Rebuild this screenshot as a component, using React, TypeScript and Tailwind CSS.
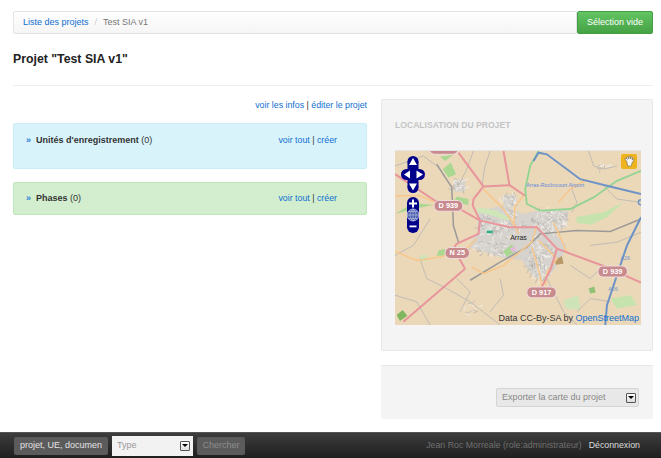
import React from "react";

const font = { fontFamily: '"Liberation Sans", Arial, sans-serif' };

// little street grid for the town, always the same numbers
function buildStreets(start: number, count: number) {
  const out: string[] = [];
  let seed = start;
  const next = () => {
    seed = (seed * 1103 + 12345) % 65536;
    return seed / 65536;
  };
  const blobs = [
    { x: 330, y: 235, rx: 70, ry: 45, n: 60 },
    { x: 480, y: 225, rx: 60, ry: 35, n: 55 },
    { x: 450, y: 340, rx: 45, ry: 70, n: 70 },
    { x: 300, y: 310, rx: 60, ry: 25, n: 30 },
    { x: 205, y: 120, rx: 22, ry: 22, n: 14 },
    { x: 355, y: 165, rx: 25, ry: 25, n: 16 },
    { x: 640, y: 60, rx: 18, ry: 14, n: 6 },
    { x: 240, y: 490, rx: 35, ry: 18, n: 8 },
  ];
  blobs.forEach((b) => {
    for (let i = 0; i < Math.round((b.n * count) / 100); i++) {
      const a = next() * Math.PI * 2;
      const r = Math.sqrt(next());
      const x = b.x + Math.cos(a) * r * b.rx;
      const y = b.y + Math.sin(a) * r * b.ry;
      const d = next() * Math.PI * 2;
      const l = 6 + next() * 12;
      out.push(`M${x.toFixed(0)} ${y.toFixed(0)} L${(x + Math.cos(d) * l).toFixed(0)} ${(y + Math.sin(d) * l).toFixed(0)}`);
    }
  });
  return out.join(" ");
}

const darkStreets = buildStreets(17, 70);
const lightStreets = buildStreets(401, 100);

function RoadLabel({ x, y, w, text }: { x: number; y: number; w: number; text?: string }) {
  return (
    <g>
      <rect x={x} y={y} width={w} height={33} rx={15} fill="#c98a8e" stroke="#efdcdc" strokeWidth={3} />
      {text && (
        <text x={x + w / 2} y={y + 24} textAnchor="middle" fontSize={22} fontWeight={700} fill="#fff" fontFamily="Liberation Sans, sans-serif">
          {text}
        </text>
      )}
    </g>
  );
}

function OsmMap() {
  const red = "#e8959b";
  const orange = "#f8c68a";
  const grey = "#b9b7b2";
  return (
    <svg viewBox="15 15 737 525" preserveAspectRatio="none" className="block w-full h-full">
      <rect x="15" y="15" width="737" height="525" fill="#ebd8b9" />
      {/* green patches */}
      <g fill="#aad792">
        <path d="M158 70 L182 50 L198 85 L175 95 Z" />
        <path d="M150 32 L190 26 L165 45 Z" />
        <path d="M20 510 L38 495 L52 512 L30 528 Z" fill="#7fb65f" />
        <path d="M595 430 L612 424 L616 442 L600 445 Z" fill="#8fc274" />
        <path d="M660 460 L720 450 L740 480 L680 490 Z" fill="#c6e3ad" />
        <path d="M235 160 L200 152 L190 170 L235 178 Z" />
        <path d="M15 205 L70 172 L130 178 L70 190 Z" />
        <path d="M520 465 L565 450 L570 495 L525 490 Z" fill="#cfe3b9" />
        <path d="M145 315 L165 310 L165 332 L140 330 Z" />
        <path d="M90 330 L112 328 L112 348 L92 348 Z" fill="#cfe3b9" />
        <path d="M555 215 L640 200 L700 170 L650 215 L600 238 Z" fill="#c6e3ad" />
      </g>
      {/* built-up area */}
      <g fill="#d6d2cd">
        <path d="M265 195 L340 180 L400 205 L440 195 L535 195 L530 240 L490 262 L530 300 L510 345 L490 375 L470 405 L430 395 L395 345 L330 335 L235 305 L262 260 Z" />
        <path d="M190 105 L225 100 L225 135 L195 140 Z" />
        <path d="M335 150 L375 145 L385 180 L345 190 Z" />
      </g>
      <path d={lightStreets} fill="none" stroke="#f2efe9" strokeWidth={2.4} />
      <path d={darkStreets} fill="none" stroke="#aeaca8" strokeWidth={1.8} />
      {/* parks and plots in town */}
      <path d="M262 185 L320 195 L370 225 L340 222 L300 208 L262 200 Z" fill="#cfe6b8" />
      <path d="M338 318 L366 296 L378 318 L350 334 Z" fill="#aad792" />
      <path d="M558 215 L610 220 L590 235 L560 232 Z" fill="#c6e3ad" />
      <path d="M290 255 H308 V263 H290 Z" fill="#2fb08a" />
      <path d="M493 345 L515 332 L520 355 L497 358 Z" fill="#b89a6a" />
      <path d="M360 308 L375 303 L378 318 L365 320 Z" fill="#e4b8dc" />
      {/* minor roads */}
      <g fill="none" stroke={grey} strokeWidth={2.6}>
        <path d="M15 60 L100 30 L140 60" />
        <path d="M250 15 L230 70 L210 110" />
        <path d="M300 15 L285 60 L275 120" />
        <path d="M595 15 L610 60 L640 70 L680 60" />
        <path d="M120 220 L70 300 L15 330" />
        <path d="M90 340 L110 400 L170 430 L240 470 L330 540" />
        <path d="M330 400 L340 450 L300 500" />
        <path d="M470 400 L520 500 L560 540" />
        <path d="M540 360 L600 400 L640 360" />
        <path d="M600 300 L680 290 L752 260" />
        <path d="M15 450 L80 470 L120 540" />
        <path d="M200 400 L240 440 L210 500" />
        <path d="M640 120 L680 160 L752 170" />
        <path d="M560 500 L600 460 L660 470" />
        <path d="M545 130 L560 170 L545 200" />
      </g>
      {/* railway */}
      <g fill="none" stroke="#9b9a98" strokeWidth={4.5}>
        <path d="M140 55 L185 125 L190 240 L205 290" />
        <path d="M240 405 L330 350 L410 305 L450 265 L560 255 L660 258 L752 220" />
      </g>
      {/* secondary roads */}
      <g fill="none" stroke={orange} strokeWidth={4.5}>
        <path d="M15 318 L80 345 L150 335 L230 310 L260 280" />
        <path d="M15 150 L90 150 L135 170" />
        <path d="M280 130 L340 190 L375 240 L385 265" />
        <path d="M405 145 L375 180 L370 240" />
        <path d="M245 365 L280 385 L340 360 L425 290 L440 240" />
        <path d="M425 305 L450 390 L455 425" />
        <path d="M445 285 L500 340 L470 380 L465 420" />
        <path d="M490 230 L530 320" />
        <path d="M505 170 L540 130 L590 100" />
      </g>
      {/* primary roads */}
      <g fill="none" stroke={red} strokeWidth={6}>
        <path d="M15 85 L135 165 L218 195 L270 225 L360 245 L440 245 L500 310 L640 362 L752 412" />
        <path d="M340 15 L358 118 L405 150" />
        <path d="M205 20 L280 122 L358 118 M280 122 L250 160 L248 180 L270 225 L265 265 L200 295 L190 310" />
        <path d="M225 370 L40 530" />
        <path d="M205 335 L225 370" />
        <path d="M500 310 L480 375 L455 425" />
      </g>
      {/* trunk and motorway */}
      <g fill="none">
        <path d="M445 15 L420 60 L405 130 L410 175 L450 195 L540 190 L610 155 L680 105 L752 75" stroke="#93d493" strokeWidth={5.5} />
        <path d="M430 45 L445 20 L470 25 L570 100 L650 120 L752 145" stroke="#6d93c6" strokeWidth={6} />
        <path d="M752 215 L710 300 L680 390 L650 480 L645 540" stroke="#6d93c6" strokeWidth={6} />
      </g>
      <circle cx="752" cy="170" r="8" fill="none" stroke="#6d93c6" strokeWidth={4} />
      <text x="495" y="125" textAnchor="middle" fontSize={16} fill="#5f8bdc" fontFamily="Liberation Sans, sans-serif">
        Arras-Roclincourt Airport
      </text>
      <text x="385" y="283" textAnchor="middle" fontSize={21} fill="#222" fontFamily="Liberation Sans, sans-serif">
        Arras
      </text>
      <text x="705" y="344" textAnchor="middle" fontSize={16} fill="#6d93c6" fontFamily="Liberation Sans, sans-serif">A26</text>
      <text x="668" y="437" textAnchor="middle" fontSize={16} fill="#6d93c6" fontFamily="Liberation Sans, sans-serif">A26</text>
      <RoadLabel x={132} y={164} w={86} text="D 939" />
      <RoadLabel x={118} y={-8} w={86} />
      <RoadLabel x={165} y={306} w={73} text="N 25" />
      <RoadLabel x={623} y={362} w={88} text="D 939" />
      <RoadLabel x={410} y={425} w={88} text="D 917" />
    </svg>
  );
}

function PanZoom() {
  const navy = "#00008b";
  return (
    <svg viewBox="0 0 24 78" className="w-[24px] h-[78px]">
      <circle cx="12" cy="5.5" r="5.5" fill={navy} />
      <circle cx="12" cy="31.5" r="5.5" fill={navy} />
      <rect x="6.5" y="5.5" width="11" height="26" fill={navy} />
      <rect x="0" y="13" width="24" height="11" rx="5.5" fill={navy} />
      <path d="M12 2 L16 9 H8 Z M12 34.5 L16 27.5 H8 Z M3 18.5 L9 14.5 V22.5 Z M22 18.5 L15.5 14.5 V22.5 Z" fill="#fff" />
      <rect x="6" y="41" width="12" height="36" rx="6" fill={navy} />
      <path d="M11 43.5 H13 V46.5 H16 V48.5 H13 V51.5 H11 V48.5 H8 V46.5 H11 Z" fill="#fff" />
      <circle cx="12" cy="59" r="6" fill="#4a5cb0" stroke="#d4d9ee" strokeWidth="0.7" />
      <path d="M6 59 H18 M12 53 V65 M7.5 55.5 H16.5 M7.5 62.5 H16.5 M12 53 C8 55.5 8 62.5 12 65 C16 62.5 16 55.5 12 53" fill="none" stroke="#d4d9ee" strokeWidth="0.5" />
      <rect x="8.5" y="69.5" width="7" height="1.8" fill="#fff" />
    </svg>
  );
}

function HandButton() {
  return (
    <div className="w-[16px] h-[15px] rounded-[2px] bg-[#eeb31d] flex items-center justify-center">
      <svg viewBox="0 0 24 24" className="w-[13px] h-[13px]">
        <path
          d="M7 12 L4 8 C3 6 5 5 6.5 6.5 L8 8 L7 4.5 C6.8 2.8 9 2.5 9.6 4 L11 7 L11.2 3 C11.4 1.5 13.6 1.5 13.7 3 L14 7 L15.4 4 C16 2.7 18 3.4 17.6 5 L16.6 9 L18.6 7.6 C20 6.8 21 8.3 20 9.5 L17 14 C16 17 15.5 19 14 21 L8.5 20 C8 17 7.5 14 7 12 Z"
          fill="#f4f4f4"
          stroke="#555"
          strokeWidth="1"
          strokeLinejoin="round"
        />
      </svg>
    </div>
  );
}

function Arrow() {
  return (
    <span className="w-[10px] h-[10px] border border-[#555] rounded-[1px] bg-gradient-to-b from-white to-[#ddd] flex items-center justify-center shrink-0">
      <span className="w-0 h-0 border-x-[3px] border-x-transparent border-t-[3px] border-t-black" />
    </span>
  );
}

function Rubrique({ title, count, className }: { title: string; count: number; className: string }) {
  return (
    <div className={`rounded-[2px] border pl-[12px] pr-[29px] ${className}`}>
      <div className="flex items-center justify-between">
        <div className="text-[9px] text-[#333] flex items-center">
          <span className="text-[#2f7ed8] font-bold w-[10px]">»</span>
          <b>{title}</b>&nbsp;({count})
        </div>
        <div className="text-[8.8px] text-[#333] -mt-[1px]">
          <a className="text-[#0f6fd1]">voir tout</a> | <a className="text-[#0f6fd1]">créer</a>
        </div>
      </div>
    </div>
  );
}

export default function App() {
  return (
    <div className="w-[661px] h-[458px] bg-white flex flex-col overflow-hidden text-[#333]" style={font}>
      <div className="flex-1 pl-[13px] pr-[8px] pt-[11px]">
        <div className="flex h-[23px]">
          <div className="flex-1 flex items-center pl-[9px] text-[9px] border border-[#e3e3e3] rounded-l-[2px] bg-gradient-to-b from-white to-[#f5f5f5]">
            <a className="text-[#0f6fd1]">Liste des projets</a>
            <span className="text-[#ccc] mx-[6px]">/</span>
            <span className="text-[#777]">Test SIA v1</span>
          </div>
          <div className="w-[76px] flex items-center justify-center text-[9px] text-white rounded-[2px] border border-[#429c43] bg-gradient-to-b from-[#62c462] to-[#45a245]">
            Sélection vide
          </div>
        </div>

        <h1 className="text-[12.3px] leading-[14px] font-bold text-[#222] mt-[18px]">Projet "Test SIA v1"</h1>
        <div className="h-px bg-[#eeeeee] mt-[19px]" />

        <div className="flex gap-[14px] mt-[13px]">
          <div className="w-[354px]">
            <div className="text-[8.8px] leading-[11px] text-right mt-[1px] text-[#333]">
              <a className="text-[#0f6fd1]">voir les infos</a> | <a className="text-[#0f6fd1]">éditer le projet</a>
            </div>
            <Rubrique
              title="Unités d'enregistrement"
              count={0}
              className="mt-[12px] h-[46px] pt-[10px] bg-[#d9f3fb] border-[#c8ecf8]"
            />
            <Rubrique
              title="Phases"
              count={0}
              className="mt-[13px] h-[33px] pt-[9px] bg-[#d2eecf] border-[#bfe6bc]"
            />
          </div>

          <div className="w-[272px]">
            <div className="h-[252px] bg-[#f4f4f4] border border-[#e8e8e8] rounded-[2px] px-[13px] pt-[20px]">
              <div className="text-[8.6px] leading-[11px] font-bold text-[#c4c4c4]">LOCALISATION DU PROJET</div>
              <div className="relative h-[175px] w-[246px] mt-[19px] border-t border-[#e4e4e4]">
                <OsmMap />
                <div className="absolute left-[6px] top-[5px]">
                  <PanZoom />
                </div>
                <div className="absolute right-[4px] top-[3px]">
                  <HandButton />
                </div>
                <div className="absolute right-[2px] bottom-[1px] text-[9px] leading-[12px] text-[#333]">
                  Data CC-By-SA by <a className="text-[#0f6fd1]">OpenStreetMap</a>
                </div>
              </div>
            </div>
            <div className="h-[54px] mt-[14px] bg-[#f4f4f4] border-t border-[#e8e8e8] rounded-b-[2px] flex justify-end items-start pr-[14px] pt-[22px]">
              <div className="w-[143px] h-[19px] bg-[#e8e8e8] border border-[#d4d4d4] rounded-[2px] flex items-center justify-between pl-[5px] pr-[2px] text-[9px] text-[#888]">
                Exporter la carte du projet
                <Arrow />
              </div>
            </div>
          </div>
        </div>
      </div>

      <div className="h-[26px] shrink-0 bg-gradient-to-b from-[#3d3d3d] to-[#1f1f1f] border-t border-[#555] flex items-center pl-[14px] pr-[21px] text-[9px]">
        <div className="w-[94px] h-[18px] rounded-[2px] bg-[#5b5b5b] text-[#e4e4e4] flex items-center justify-center overflow-hidden whitespace-nowrap">
          projet, UE, documen
        </div>
        <div className="w-[81px] h-[20px] ml-[4px] bg-[#f2f2f2] flex items-center justify-between pl-[5px] pr-[3px] text-[#999]">
          Type
          <Arrow />
        </div>
        <div className="w-[48px] h-[18px] ml-[4px] rounded-[2px] bg-[#5b5b5b] text-[#8c8c8c] flex items-center justify-center">
          Chercher
        </div>
        <div className="ml-auto text-[8.8px] text-[#6f6f6f]">Jean Roc Morreale (role:administrateur)</div>
        <a className="ml-[7px] text-[8.8px] text-[#dddddd]">Déconnexion</a>
      </div>
    </div>
  );
}
